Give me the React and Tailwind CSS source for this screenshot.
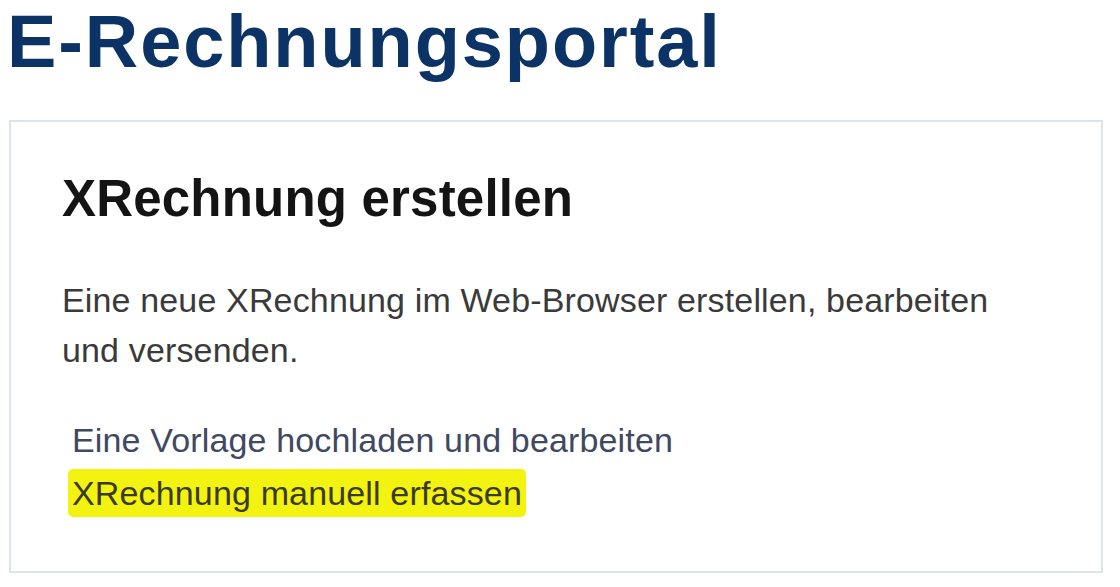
export default function App() {
  return (
    <div className="w-[1120px] h-[587px] bg-white overflow-hidden" style={{ fontFamily: '"Liberation Sans", Arial, sans-serif' }}>
      <h1 className="ml-[7px] text-[74px] leading-[83px] font-bold text-[#0b3366] tracking-[1.9px]">
        E-Rechnungsportal
      </h1>
      <div className="mt-[37px] ml-[9px] w-[1094px] border-2 border-[#dde3ea] pl-[51px] pt-[51px] pb-[54px]">
        <h2 className="text-[51px] leading-none font-bold text-[#141414] tracking-[0.2px]">XRechnung erstellen</h2>
        <p className="mt-[51px] text-[34px] leading-[50px] text-[#3a3a3a] w-[970px] tracking-[0.15px]">
          Eine neue XRechnung im Web-Browser erstellen, bearbeiten und versenden.
        </p>
        <div className="mt-[41px] ml-[10px] flex flex-col items-start gap-[5px] text-[34px] leading-[48px] tracking-[0.15px]">
          <a className="text-[#404862]">Eine Vorlage hochladen und bearbeiten</a>
          <a className="-ml-[4px] px-[4px] bg-[#f3f312] text-[#3b3b1c] rounded-[5px]">XRechnung manuell erfassen</a>
        </div>
      </div>
    </div>
  );
}
